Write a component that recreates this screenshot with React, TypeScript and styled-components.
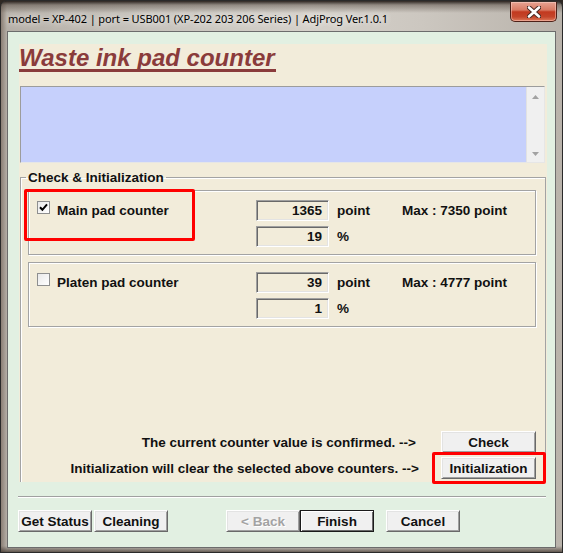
import styled, { createGlobalStyle } from 'styled-components';

const GlobalStyle = createGlobalStyle`
  html, body {
    margin: 0;
    padding: 0;
    background: #2f2823;
  }
  body {
    width: 563px;
    height: 553px;
    overflow: hidden;
  }
`;

const Window = styled.div`
  box-sizing: border-box;
  width: 563px;
  height: 553px;
  display: flex;
  flex-direction: column;
  border: 1px solid #2a2a2a;
  border-radius: 7px 7px 0 0;
  overflow: hidden;
  background:
    linear-gradient(180deg, rgba(28, 20, 16, 0.9) 0px, rgba(70, 58, 50, 0.45) 4px, rgba(255, 255, 255, 0) 12px),
    linear-gradient(0deg, rgba(60, 48, 40, 0.7) 0px, rgba(255, 255, 255, 0) 6px),
    linear-gradient(90deg, #8b7f75 0px, #b5afa7 6px, #c6c2bb 25%, #d5d1ca 55%, #ccc7c0 75%, #b9b3ab 100%);
  font-family: 'Liberation Sans', Arial, sans-serif;
`;

const TitleBar = styled.div`
  display: flex;
  align-items: flex-start;
  height: 30px;
  padding-left: 7px;
`;

const Caption = styled.span`
  margin-top: 10px;
  font-family: 'Noto Sans', 'Open Sans', sans-serif;
  font-size: 11px;
  letter-spacing: -0.1px;
  line-height: 16px;
  color: #000;
  white-space: nowrap;
  text-shadow: 0 0 6px rgba(255, 255, 255, 0.9), 0 0 10px rgba(255, 255, 255, 0.7);
`;

const CloseButton = styled.div`
  box-sizing: border-box;
  margin: 1px 5px 0 auto;
  width: 47px;
  height: 20px;
  display: flex;
  align-items: center;
  justify-content: center;
  border: 1px solid #4e2118;
  border-top: none;
  border-radius: 0 0 5px 5px;
  box-shadow: inset 0 0 0 1px rgba(255, 220, 210, 0.45);
  background: linear-gradient(180deg, #e7a493 0%, #d87a63 42%, #c2391f 52%, #c4452a 78%, #df7a5b 100%);
`;

const Client = styled.div`
  flex: 1;
  display: flex;
  flex-direction: column;
  margin: 0 6px 4px;
  padding: 12px 8px 0 11px;
  border: 1px solid #6c6c6c;
  background: #e2f0e2;
`;

const Panel = styled.div`
  height: 438px;
  display: flex;
  flex-direction: column;
  background: #f2ecda;
`;

const Heading = styled.h1`
  align-self: flex-start;
  margin: 2px 0 0;
  font-size: 24px;
  font-weight: bold;
  font-style: italic;
  line-height: 23px;
  color: #8a3b3b;
  border-bottom: 3px solid #8a3b3b;
  padding-right: 1px;
`;

const LogArea = styled.div`
  box-sizing: border-box;
  height: 77px;
  margin: 14px 2px 0 1px;
  display: flex;
  justify-content: flex-end;
  border: 1px solid;
  border-color: #9c9c9c #e6e6e6 #e6e6e6 #9c9c9c;
  background: #c6d0fc;
`;

const ScrollTrack = styled.div`
  width: 17px;
  display: flex;
  flex-direction: column;
  justify-content: space-between;
  align-items: center;
  padding: 8px 0 6px;
  border-left: 1px solid #e2e2e2;
  background: #f0f0f0;
`;

const GroupBox = styled.fieldset`
  flex: 1;
  min-width: 0;
  margin: 7px 1px 0 1px;
  padding: 0 9px 0 7px;
  border: 1px solid #a3a3a3;
  border-bottom: none;
  box-shadow: inset 1px 1px 0 #fff;
`;

const Legend = styled.legend`
  margin-left: -2px;
  padding: 0 2px;
  font-size: 13.5px;
  font-weight: bold;
  line-height: 15px;
  color: #111;
`;

const PadBox = styled.div<{ $top: number }>`
  position: relative;
  box-sizing: border-box;
  height: 65px;
  margin-top: ${(p) => p.$top}px;
  padding: 9px 0 0 8px;
  display: grid;
  grid-template-columns: 219px 73px 73px auto;
  grid-template-rows: 21px 21px;
  row-gap: 5px;
  border: 1px solid #a3a3a3;
  box-shadow: inset 1px 1px 0 #fff, 1px 1px 0 #fff;
`;

const CheckLabel = styled.label`
  display: flex;
  align-items: flex-start;
  gap: 7px;
`;

const CheckBox = styled.span`
  box-sizing: border-box;
  width: 13px;
  height: 13px;
  margin-top: 1px;
  display: flex;
  align-items: center;
  justify-content: center;
  border: 1px solid #8e8f8f;
  background: linear-gradient(135deg, #e9e9e9, #fff);
`;

const Text = styled.span`
  font-size: 13.5px;
  font-weight: bold;
  line-height: 21px;
  color: #111;
  white-space: nowrap;
`;

const Unit = styled(Text)`
  padding-left: 8px;
`;

const ValueField = styled.div`
  box-sizing: border-box;
  height: 21px;
  padding-right: 6px;
  text-align: right;
  font-size: 13.5px;
  font-weight: bold;
  line-height: 19px;
  color: #111;
  border: 1px solid;
  border-color: #a0a0a0 #fff #fff #a0a0a0;
  box-shadow: inset 1px 1px 0 #696969, inset -1px -1px 0 #e3e3e3;
`;

const Highlight = styled.div<{ $l: number; $t: number; $w: number; $h: number }>`
  position: absolute;
  left: ${(p) => p.$l}px;
  top: ${(p) => p.$t}px;
  width: ${(p) => p.$w}px;
  height: ${(p) => p.$h}px;
  box-sizing: border-box;
  border: 3px solid #ff0000;
  border-radius: 2px;
  pointer-events: none;
`;

const Messages = styled.div`
  margin-top: 104px;
  display: flex;
  flex-direction: column;
  gap: 4px;
`;

const MessageRow = styled.div<{ $gap: number }>`
  display: flex;
  justify-content: flex-end;
  align-items: center;
  gap: ${(p) => p.$gap}px;
`;

const HighlightWrap = styled.span`
  position: relative;
  display: inline-flex;
`;

const Button = styled.button<{ $w?: number; $default?: boolean }>`
  box-sizing: border-box;
  width: ${(p) => p.$w ?? 74}px;
  height: 22px;
  padding: 0;
  font-family: 'Liberation Sans', Arial, sans-serif;
  font-size: 13.5px;
  font-weight: bold;
  color: #111;
  background: #f0f0f0;
  border: 1px solid;
  border-color: ${(p) => (p.$default ? '#1a1a1a' : '#fff #696969 #696969 #fff')};
  box-shadow: ${(p) =>
    p.$default
      ? 'inset 1px 1px 0 #fff, inset -1px -1px 0 #696969'
      : 'inset 1px 1px 0 #e3e3e3, inset -1px -1px 0 #a0a0a0'};

  &:disabled {
    color: #a3a3a3;
    text-shadow: 1px 1px 0 #fff;
  }
`;

const Separator = styled.div`
  height: 0;
  margin: 14px 1px 0 -1px;
  border-top: 1px solid #a0a0a0;
  border-bottom: 1px solid #fff;
`;

const Footer = styled.div`
  display: flex;
  margin: 12px 0 0 -1px;
`;

const Spacer = styled.span<{ $w: number }>`
  width: ${(p) => p.$w}px;
  flex: none;
`;

const Arrow = ({ up }: { up?: boolean }) => (
  <svg width="7" height="4" viewBox="0 0 7 4">
    <path d={up ? 'M0 4 L3.5 0 L7 4 Z' : 'M0 0 L3.5 4 L7 0 Z'} fill="#a2a2a2" />
  </svg>
);

const CloseGlyph = () => (
  <svg width="14" height="12" viewBox="0 0 14 12">
    <path d="M2 1.5 L12 10.5 M12 1.5 L2 10.5" stroke="#4a2a24" strokeWidth="4.6" strokeLinecap="round" />
    <path d="M2 1.5 L12 10.5 M12 1.5 L2 10.5" stroke="#fff" strokeWidth="2.6" strokeLinecap="round" />
  </svg>
);

const Tick = () => (
  <svg width="9" height="9" viewBox="0 0 9 9">
    <path d="M1 4.2 L3.4 6.8 L8 1.4" fill="none" stroke="#000" strokeWidth="2" />
  </svg>
);

type Pad = {
  name: string;
  checked: boolean;
  points: number;
  max: number;
  highlighted?: boolean;
};

const pads: Pad[] = [
  { name: 'Main pad counter', checked: true, points: 1365, max: 7350, highlighted: true },
  { name: 'Platen pad counter', checked: false, points: 39, max: 4777 },
];

const PadCounter = ({ pad, top }: { pad: Pad; top: number }) => (
  <PadBox $top={top}>
    <CheckLabel>
      <CheckBox>{pad.checked && <Tick />}</CheckBox>
      <Text>{pad.name}</Text>
    </CheckLabel>
    <ValueField>{pad.points}</ValueField>
    <Unit>point</Unit>
    <Text>Max : {pad.max} point</Text>
    <span />
    <ValueField>{Math.max(1, Math.round((pad.points / pad.max) * 100))}</ValueField>
    <Unit>%</Unit>
    {pad.highlighted && <Highlight $l={-5} $t={-2} $w={171} $h={52} />}
  </PadBox>
);

const App = () => {
  return (
    <>
      <GlobalStyle />
      <Window>
        <TitleBar>
          <Caption>model = XP-402 | port = USB001 (XP-202 203 206 Series) | AdjProg Ver.1.0.1</Caption>
          <CloseButton>
            <CloseGlyph />
          </CloseButton>
        </TitleBar>
        <Client>
          <Panel>
            <Heading>Waste ink pad counter</Heading>
            <LogArea>
              <ScrollTrack>
                <Arrow up />
                <Arrow />
              </ScrollTrack>
            </LogArea>
            <GroupBox>
              <Legend>Check &amp; Initialization</Legend>
              {pads.map((pad, i) => (
                <PadCounter key={pad.name} pad={pad} top={i === 0 ? 5 : 7} />
              ))}
              <Messages>
                <MessageRow $gap={25}>
                  <Text>The current counter value is confirmed. --&gt;</Text>
                  <Button $w={95}>Check</Button>
                </MessageRow>
                <MessageRow $gap={22}>
                  <Text>Initialization will clear the selected above counters. --&gt;</Text>
                  <HighlightWrap>
                    <Button $w={95}>Initialization</Button>
                    <Highlight $l={-9} $t={-5} $w={114} $h={32} />
                  </HighlightWrap>
                </MessageRow>
              </Messages>
            </GroupBox>
          </Panel>
          <Separator />
          <Footer>
            <Button>Get Status</Button>
            <Spacer $w={2} />
            <Button>Cleaning</Button>
            <Spacer $w={58} />
            <Button disabled>&lt; Back</Button>
            <Button $default>Finish</Button>
            <Spacer $w={12} />
            <Button>Cancel</Button>
          </Footer>
        </Client>
      </Window>
    </>
  );
};

export default App;
